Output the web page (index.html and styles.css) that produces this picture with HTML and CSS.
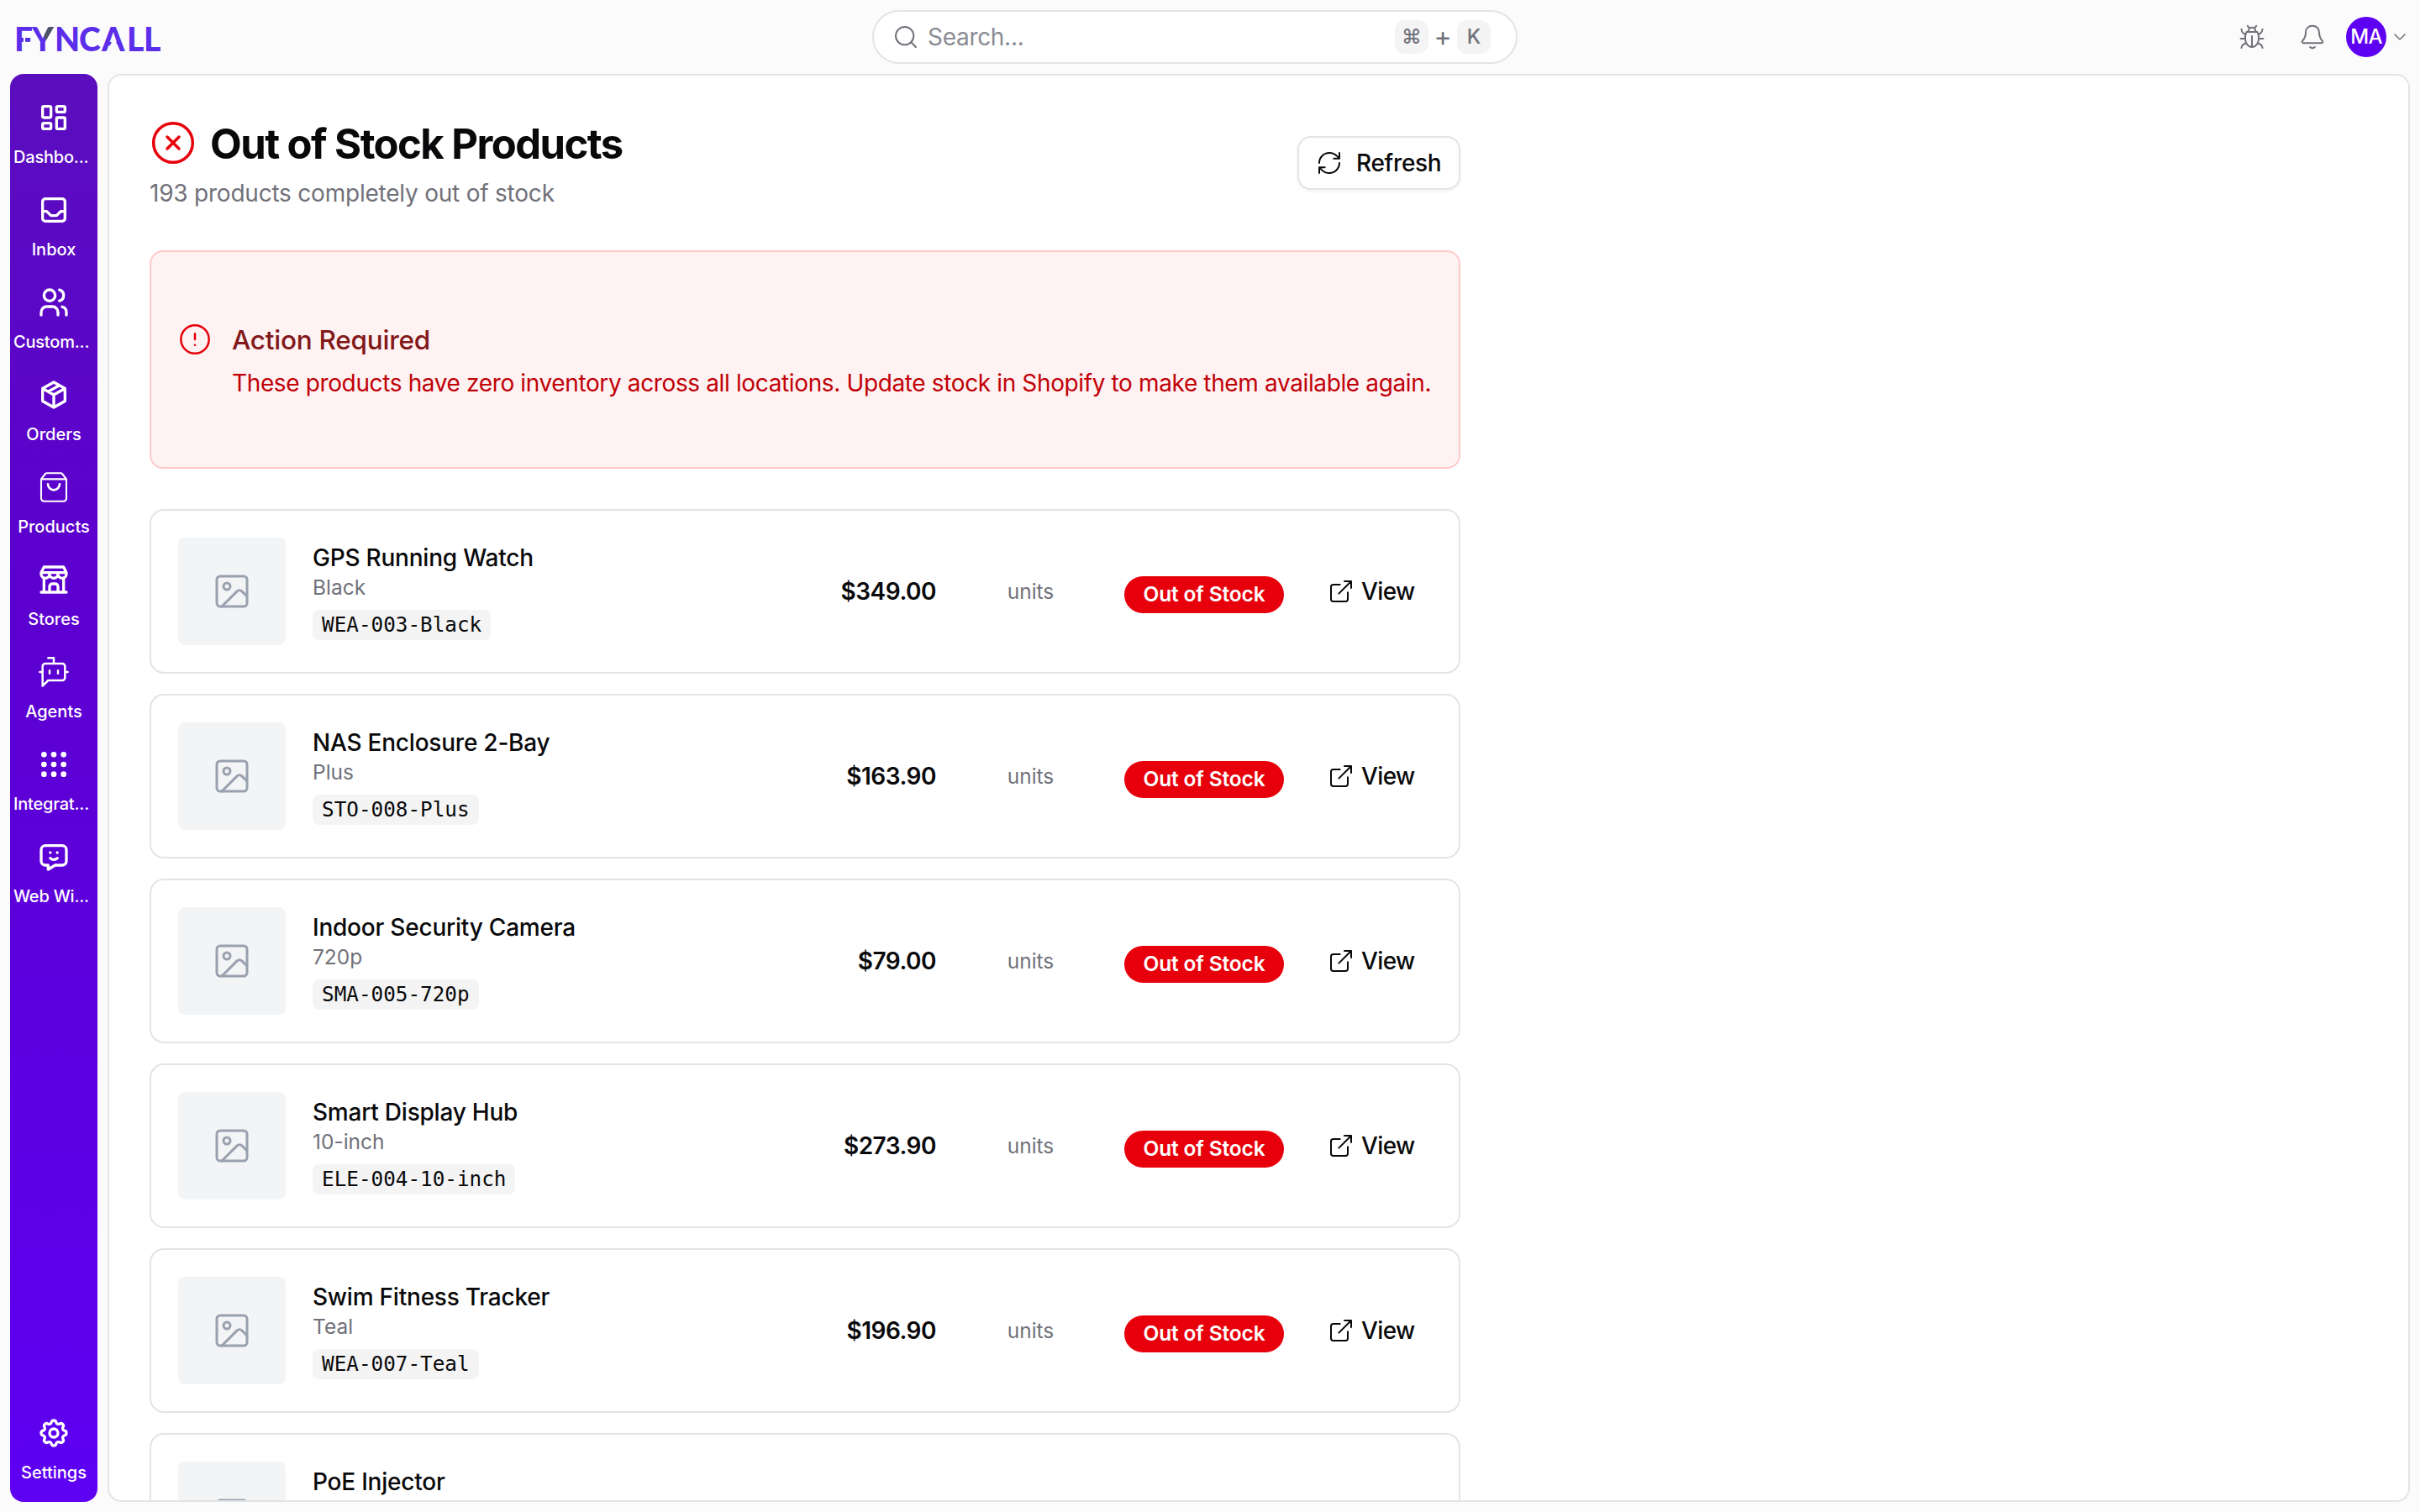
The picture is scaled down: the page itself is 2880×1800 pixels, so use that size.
FILE: index.html
```html
<!DOCTYPE html>
<html lang="en">
<head>
    <meta charset="UTF-8">
    <meta name="viewport" content="width=device-width, initial-scale=1.0">
    <title>Out of Stock Products - Fyncall</title>
    <link rel="stylesheet" href="styles.css">
</head>
<body>

    <!-- Shared icons -->
    <svg class="sprite" width="0" height="0">
        <symbol id="i-image" viewBox="0 0 24 24"><rect x="3" y="3" width="18" height="18" rx="2"/><circle cx="9" cy="9" r="2"/><path d="m21 15-3.086-3.086a2 2 0 0 0-2.828 0L6 21"/></symbol>
        <symbol id="i-external" viewBox="0 0 24 24"><path d="M15 3h6v6M10 14 21 3M18 13v6a2 2 0 0 1-2 2H5a2 2 0 0 1-2-2V8a2 2 0 0 1 2-2h6"/></symbol>
    </svg>

    <header class="topbar">
        <div class="logo"><span class="l-f">F</span><span class="l-y">Y</span><span class="l-n">N</span><span class="l-c">C</span><span class="l-a">A</span><span class="l-l">L</span><span class="l-l2">L</span></div>

        <div class="search">
            <svg class="icon thin" viewBox="0 0 24 24"><circle cx="11" cy="11" r="8"/><path d="m21 21-4.3-4.3"/></svg>
            <span class="search-text">Search...</span>
            <kbd>⌘</kbd>
            <span class="plus">+</span>
            <kbd>K</kbd>
        </div>

        <div class="actions">
            <svg class="action-icon bug" viewBox="0 0 32 32"><path d="M9.6 10h12.8c1.2 2 1.7 4 1.7 7 0 6-3 11-8.1 11s-8.1-5-8.1-11c0-3 .5-5 1.7-7zM11.6 10c0-3 1.7-5.3 4.4-5.3s4.4 2.3 4.4 5.3M10.8 2.8l2.2 2.6M21.2 2.8 19 5.4M16 15v12.5M2.6 18h5.2M24.2 18h5.2M3.5 6.8c.2 3.4 1.4 5.3 5 6.2M28.5 6.8c-.2 3.4-1.4 5.3-5 6.2M3.5 29c.2-3 1.7-4.8 5.4-5.6M28.5 29c-.2-3-1.7-4.8-5.4-5.6"/></svg>
            <svg class="action-icon bell" viewBox="0 0 32 32"><path d="M16 2.8c-4.8 0-8 3.2-8 7.9 0 5.2-1.7 7.4-3.6 9.6-1.1 1.3-.5 3 1.1 3h21c1.6 0 2.2-1.7 1.1-3-1.9-2.2-3.6-4.4-3.6-9.6 0-4.7-3.2-7.9-8-7.9zM13.2 28q2.8 2.8 5.6 0"/></svg>
            <div class="avatar">MA</div>
            <svg class="chevron" viewBox="0 0 16 16"><path d="m2 5 6 6 6-6"/></svg>
        </div>
    </header>

    <div class="layout">
        <nav class="sidebar">
            <a class="nav-item">
                <svg class="icon" viewBox="0 0 24 24"><rect x="4" y="4" width="6" height="8" rx="1"/><rect x="4" y="16" width="6" height="4" rx="1"/><rect x="14" y="12" width="6" height="8" rx="1"/><rect x="14" y="4" width="6" height="4" rx="1"/></svg>
                <span class="cut">Dashbo...</span>
            </a>
            <a class="nav-item">
                <svg class="icon" viewBox="0 0 24 24"><rect x="4" y="4" width="16" height="16" rx="2"/><path d="M4 13h3l3 3h4l3-3h3"/></svg>
                <span>Inbox</span>
            </a>
            <a class="nav-item">
                <svg class="icon" viewBox="0 0 24 24"><circle cx="9" cy="7" r="4"/><path d="M3 21v-2a4 4 0 0 1 4-4h4a4 4 0 0 1 4 4v2M16 3.13a4 4 0 0 1 0 7.75M21 21v-2a4 4 0 0 0-3-3.85"/></svg>
                <span class="cut">Custom...</span>
            </a>
            <a class="nav-item">
                <svg class="icon" viewBox="0 0 24 24"><path d="m12 3 8 4.5v9L12 21l-8-4.5v-9L12 3M12 12l8-4.5M12 12v9M12 12 4 7.5M16 5.25l-8 4.5"/></svg>
                <span>Orders</span>
            </a>
            <a class="nav-item">
                <svg class="icon bag" viewBox="0 0 24 24"><path d="M3 6.2 6 2.4q.3-.5 1-.5h10q.7 0 1 .5l3 3.8V20a2 2 0 0 1-2 2H5a2 2 0 0 1-2-2zM3 6.2h18"/><path class="handle" d="M7.8 9.8a4.2 4.2 0 0 0 8.4 0"/></svg>
                <span>Products</span>
            </a>
            <a class="nav-item">
                <svg class="icon" viewBox="0 0 24 24"><path d="M3 21h18M3 7v1a3 3 0 0 0 6 0V7m0 1a3 3 0 0 0 6 0V7m0 1a3 3 0 0 0 6 0V7H3l2-4h14l2 4M5 21V10.85M19 21V10.85M9 21v-4a2 2 0 0 1 2-2h2a2 2 0 0 1 2 2v4"/></svg>
                <span>Stores</span>
            </a>
            <a class="nav-item">
                <svg class="icon thin" viewBox="0 0 24 24"><path d="M12 6V2H8M8 18l-4 4V8a2 2 0 0 1 2-2h12a2 2 0 0 1 2 2v8a2 2 0 0 1-2 2ZM2 12h2M9 11v2M15 11v2M20 12h2"/></svg>
                <span>Agents</span>
            </a>
            <a class="nav-item">
                <svg class="icon" viewBox="0 0 24 24"><circle cx="5" cy="5" r="1"/><circle cx="12" cy="5" r="1"/><circle cx="19" cy="5" r="1"/><circle cx="5" cy="12" r="1"/><circle cx="12" cy="12" r="1"/><circle cx="19" cy="12" r="1"/><circle cx="5" cy="19" r="1"/><circle cx="12" cy="19" r="1"/><circle cx="19" cy="19" r="1"/></svg>
                <span class="cut">Integrat...</span>
            </a>
            <a class="nav-item">
                <svg class="icon" viewBox="0 0 24 24"><path d="M18 4a3 3 0 0 1 3 3v8a3 3 0 0 1-3 3h-5l-5 3v-3H6a3 3 0 0 1-3-3V7a3 3 0 0 1 3-3zM9.5 9h.01M14.5 9h.01M9.5 13a3.5 3.5 0 0 0 5 0"/></svg>
                <span class="cut">Web Wi...</span>
            </a>
            <a class="nav-item settings">
                <svg class="icon" viewBox="0 0 24 24"><path d="M10.325 4.317c.426-1.756 2.924-1.756 3.35 0a1.724 1.724 0 0 0 2.573 1.066c1.543-.94 3.31.826 2.37 2.37a1.724 1.724 0 0 0 1.065 2.572c1.756.426 1.756 2.924 0 3.35a1.724 1.724 0 0 0-1.066 2.573c.94 1.543-.826 3.31-2.37 2.37a1.724 1.724 0 0 0-2.572 1.065c-.426 1.756-2.924 1.756-3.35 0a1.724 1.724 0 0 0-2.573-1.066c-1.543.94-3.31-.826-2.37-2.37a1.724 1.724 0 0 0-1.065-2.572c-1.756-.426-1.756-2.924 0-3.35a1.724 1.724 0 0 0 1.066-2.573c-.94-1.543.826-3.31 2.37-2.37 1 .608 2.296.07 2.572-1.065z"/><circle cx="12" cy="12" r="3"/></svg>
                <span>Settings</span>
            </a>
        </nav>

        <main class="panel">
            <div class="content">
                <div class="page-head">
                    <div>
                        <h1><svg class="title-icon" viewBox="0 0 24 24"><circle cx="12" cy="12" r="10"/><path d="m15 9-6 6M9 9l6 6"/></svg><span>Out of Stock Products</span></h1>
                        <p class="subtitle">193 products completely out of stock</p>
                    </div>
                    <button class="refresh">
                        <svg viewBox="0 0 24 24"><path d="M3 12a9 9 0 0 1 9-9 9.75 9.75 0 0 1 6.74 2.74L21 8M21 3v5h-5M21 12a9 9 0 0 1-9 9 9.75 9.75 0 0 1-6.74-2.74L3 16M8 16H3v5"/></svg>
                        <span>Refresh</span>
                    </button>
                </div>

                <div class="alert">
                    <svg viewBox="0 0 24 24"><circle cx="12" cy="12" r="10"/><path d="M12 8v4M12 16h.01"/></svg>
                    <div>
                        <h3>Action Required</h3>
                        <p>These products have zero inventory across all locations. Update stock in Shopify to make them available again.</p>
                    </div>
                </div>

                <div class="products">
                    <div class="card">
                        <div class="thumb"><svg><use href="#i-image"/></svg></div>
                        <div class="info">
                            <div class="name">GPS Running Watch</div>
                            <div class="variant">Black</div>
                            <code>WEA-003-Black</code>
                        </div>
                        <div class="price">$349.00</div>
                        <div class="units">units</div>
                        <div class="badge">Out of Stock</div>
                        <a class="view"><svg><use href="#i-external"/></svg>View</a>
                    </div>
                    <div class="card">
                        <div class="thumb"><svg><use href="#i-image"/></svg></div>
                        <div class="info">
                            <div class="name">NAS Enclosure 2-Bay</div>
                            <div class="variant">Plus</div>
                            <code>STO-008-Plus</code>
                        </div>
                        <div class="price">$163.90</div>
                        <div class="units">units</div>
                        <div class="badge">Out of Stock</div>
                        <a class="view"><svg><use href="#i-external"/></svg>View</a>
                    </div>
                    <div class="card">
                        <div class="thumb"><svg><use href="#i-image"/></svg></div>
                        <div class="info">
                            <div class="name">Indoor Security Camera</div>
                            <div class="variant">720p</div>
                            <code>SMA-005-720p</code>
                        </div>
                        <div class="price">$79.00</div>
                        <div class="units">units</div>
                        <div class="badge">Out of Stock</div>
                        <a class="view"><svg><use href="#i-external"/></svg>View</a>
                    </div>
                    <div class="card">
                        <div class="thumb"><svg><use href="#i-image"/></svg></div>
                        <div class="info">
                            <div class="name">Smart Display Hub</div>
                            <div class="variant">10-inch</div>
                            <code>ELE-004-10-inch</code>
                        </div>
                        <div class="price">$273.90</div>
                        <div class="units">units</div>
                        <div class="badge">Out of Stock</div>
                        <a class="view"><svg><use href="#i-external"/></svg>View</a>
                    </div>
                    <div class="card">
                        <div class="thumb"><svg><use href="#i-image"/></svg></div>
                        <div class="info">
                            <div class="name">Swim Fitness Tracker</div>
                            <div class="variant">Teal</div>
                            <code>WEA-007-Teal</code>
                        </div>
                        <div class="price">$196.90</div>
                        <div class="units">units</div>
                        <div class="badge">Out of Stock</div>
                        <a class="view"><svg><use href="#i-external"/></svg>View</a>
                    </div>
                    <div class="card">
                        <div class="thumb"><svg><use href="#i-image"/></svg></div>
                        <div class="info">
                            <div class="name">PoE Injector</div>
                        </div>
                    </div>
                </div>
            </div>
        </main>
    </div>

</body>
</html>
```

FILE: styles.css
```css
* {
    box-sizing: border-box;
}

body {
    margin: 0;
    height: 100vh;
    overflow: hidden;
    display: flex;
    flex-direction: column;
    background-color: #fbfbfb;
    color: #09090b;
    font-family: Inter, "Liberation Sans", sans-serif;
    font-size: 28px;
}

h1, h3, p {
    margin: 0;
}

svg {
    display: block;
    flex: none;
    fill: none;
    stroke: currentColor;
    stroke-width: 1.5;
    stroke-linecap: round;
    stroke-linejoin: round;
}

.sprite {
    position: absolute;
}

/* Top bar */
.topbar {
    height: 88px;
    flex: none;
    display: grid;
    grid-template-columns: 1018px 768px 1fr;
    align-items: center;
    padding: 0 18px 0 20px;
}

.logo {
    display: flex;
    color: #5b2eea;
    font-family: Lato, sans-serif;
    font-weight: 900;
    font-size: 39px;
    line-height: 48px;
    padding-top: 4px;
}

.logo span {
    position: relative;
}

.l-f { width: 21px; margin-left: -3px; }
.l-y { width: 27px; }
.l-n { width: 29px; }
.l-c { width: 27px; }
.l-a { width: 30px; }
.l-l { width: 20px; }

.l-y {
    background: linear-gradient(#4b5563, #4b5563) 15px 0 / 13px 25px no-repeat, #5b2eea;
    -webkit-background-clip: text;
    background-clip: text;
    color: transparent;
}

/* gap between the stem and the middle bar */
.l-f::after {
    content: "";
    position: absolute;
    left: 11px;
    top: 22px;
    width: 2px;
    height: 9px;
    background: #fbfbfb;
}

/* open A, no crossbar */
.l-a::after {
    content: "";
    position: absolute;
    left: 7px;
    top: 22px;
    width: 15px;
    height: 17px;
    background: #fbfbfb;
    clip-path: polygon(50% 0, 100% 100%, 0 100%);
}

.search {
    height: 64px;
    display: flex;
    align-items: center;
    padding: 0 30px 0 22px;
    border: 2px solid #e4e4e4;
    border-radius: 32px;
    background: #fff;
    color: #71717a;
}

.search .icon {
    width: 32px;
    height: 32px;
}

.search-text {
    flex: 1;
    margin-left: 10px;
    color: #8b8b93;
    letter-spacing: -0.3px;
}

kbd {
    width: 40px;
    height: 40px;
    border-radius: 12px;
    background: #f4f4f4;
    font-family: Inter, "DejaVu Sans", sans-serif;
    font-size: 24px;
    font-weight: 500;
    line-height: 40px;
    text-align: center;
}

.plus {
    width: 34px;
    font-size: 32px;
    line-height: 40px;
    text-align: center;
}

.actions {
    display: flex;
    align-items: center;
    justify-content: flex-end;
    color: #71717a;
}

.action-icon {
    width: 32px;
    height: 32px;
    stroke-width: 2;
}

.bell {
    margin-left: 40px;
}

.avatar {
    width: 48px;
    height: 48px;
    margin-left: 24px;
    border-radius: 50%;
    background: #5e00f2;
    color: #fff;
    font-size: 24px;
    font-weight: 500;
    letter-spacing: -0.8px;
    line-height: 48px;
    text-align: center;
}

.chevron {
    width: 16px;
    height: 16px;
    margin: 0 -2px 0 8px;
}

/* Sidebar */
.layout {
    flex: 1;
    min-height: 0;
    display: flex;
    gap: 12px;
    padding: 0 12px 12px;
}

.sidebar {
    width: 104px;
    display: flex;
    flex-direction: column;
    padding: 32px 4px 0;
    border-radius: 16px;
    background: linear-gradient(#5b0ebe, #5c00cf 35%, #5e00f2);
    color: #fff;
}

.nav-item {
    height: 110px;
    display: flex;
    flex-direction: column;
    align-items: center;
}

.nav-item .icon {
    width: 40px;
    height: 40px;
    stroke-width: 2;
}

.nav-item .icon.thin {
    stroke-width: 1.5;
}

.nav-item .icon.bag {
    stroke-width: 1.25;
}

.bag .handle {
    stroke-width: 1.6;
}

.nav-item span {
    margin-top: 12px;
    font-size: 20px;
    font-weight: 500;
    line-height: 30px;
    white-space: nowrap;
}

.nav-item .cut {
    align-self: flex-start;
    letter-spacing: -0.2px;
}

.settings {
    margin-top: auto;
    height: 102px;
}

/* Main panel */
.panel {
    flex: 1;
    overflow: hidden;
    border: 2px solid #e4e4e4;
    border-radius: 16px;
    background: #fff;
}

.content {
    width: 1560px;
    margin-left: 48px;
}

.page-head {
    height: 208px;
    display: flex;
    align-items: flex-start;
    justify-content: space-between;
    padding-top: 48px;
}

h1 {
    display: flex;
    align-items: center;
    gap: 16px;
    height: 64px;
    font-size: 49px;
    font-weight: 700;
    letter-spacing: -1.55px;
}

h1 span {
    padding-top: 2px;
}

.title-icon {
    width: 56px;
    height: 56px;
    color: #e7000b;
}

.subtitle {
    margin-top: 8px;
    color: #71717a;
    letter-spacing: -0.22px;
    line-height: 40px;
}

.refresh {
    width: 194px;
    height: 64px;
    margin-top: 24px;
    display: flex;
    align-items: center;
    gap: 16px;
    padding: 0 0 0 20px;
    border: 2px solid #e4e4e4;
    border-radius: 16px;
    background: #fff;
    box-shadow: 0 2px 4px rgba(0, 0, 0, 0.05);
    color: #09090b;
    font-family: inherit;
    font-size: 28px;
    font-weight: 500;
    letter-spacing: -0.3px;
}

.refresh svg {
    width: 32px;
    height: 32px;
}

.alert {
    height: 260px;
    display: flex;
    padding: 84px 32px 0;
    border: 2px solid #ffc9c9;
    border-radius: 16px;
    background: #fef2f2;
}

.alert svg {
    width: 40px;
    height: 40px;
    color: #e7000b;
}

.alert div {
    margin-left: 24px;
}

.alert h3 {
    color: #82181a;
    font-size: 31.5px;
    font-weight: 500;
    letter-spacing: -0.25px;
    line-height: 42px;
}

.alert p {
    margin-top: 9px;
    color: #c10007;
    letter-spacing: -0.37px;
    line-height: 42px;
    white-space: nowrap;
}

/* Product list */
.products {
    display: flex;
    flex-direction: column;
    gap: 24px;
    margin-top: 48px;
}

.card {
    height: 196px;
    display: grid;
    grid-template-columns: 128px 1fr 160px 160px 190px 144px;
    gap: 32px;
    align-items: center;
    padding: 32px;
    border: 2px solid #e4e4e4;
    border-radius: 17px;
}

.thumb {
    width: 128px;
    height: 128px;
    display: flex;
    align-items: center;
    justify-content: center;
    border-radius: 8px;
    background: #f3f4f6;
    color: #99a1af;
}

.thumb svg {
    width: 48px;
    height: 48px;
}

.info {
    align-self: start;
    padding-top: 6px;
}

.name {
    font-weight: 500;
    letter-spacing: -0.22px;
    line-height: 36px;
}

.variant {
    color: #71717a;
    font-size: 24.5px;
    line-height: 34px;
}

code {
    display: block;
    width: fit-content;
    margin-top: 10px;
    padding: 0 11px;
    border-radius: 8px;
    background: #f4f4f4;
    font-family: "DejaVu Sans Mono", monospace;
    font-size: 24.3px;
    line-height: 36px;
}

.price {
    font-weight: 600;
    letter-spacing: -0.5px;
    text-align: right;
}

.units {
    padding-left: 1px;
    color: #71717a;
    font-size: 24.5px;
    text-align: center;
}

.badge {
    height: 44px;
    margin-top: 8px;
    border-radius: 22px;
    background: #e7000b;
    color: #fff;
    font-size: 24.5px;
    font-weight: 600;
    letter-spacing: -0.15px;
    line-height: 43px;
    text-align: center;
}

.view {
    display: flex;
    align-items: center;
    gap: 8px;
    padding-left: 20px;
    font-weight: 500;
    letter-spacing: -0.6px;
}

.view svg {
    width: 32px;
    height: 32px;
}
```
